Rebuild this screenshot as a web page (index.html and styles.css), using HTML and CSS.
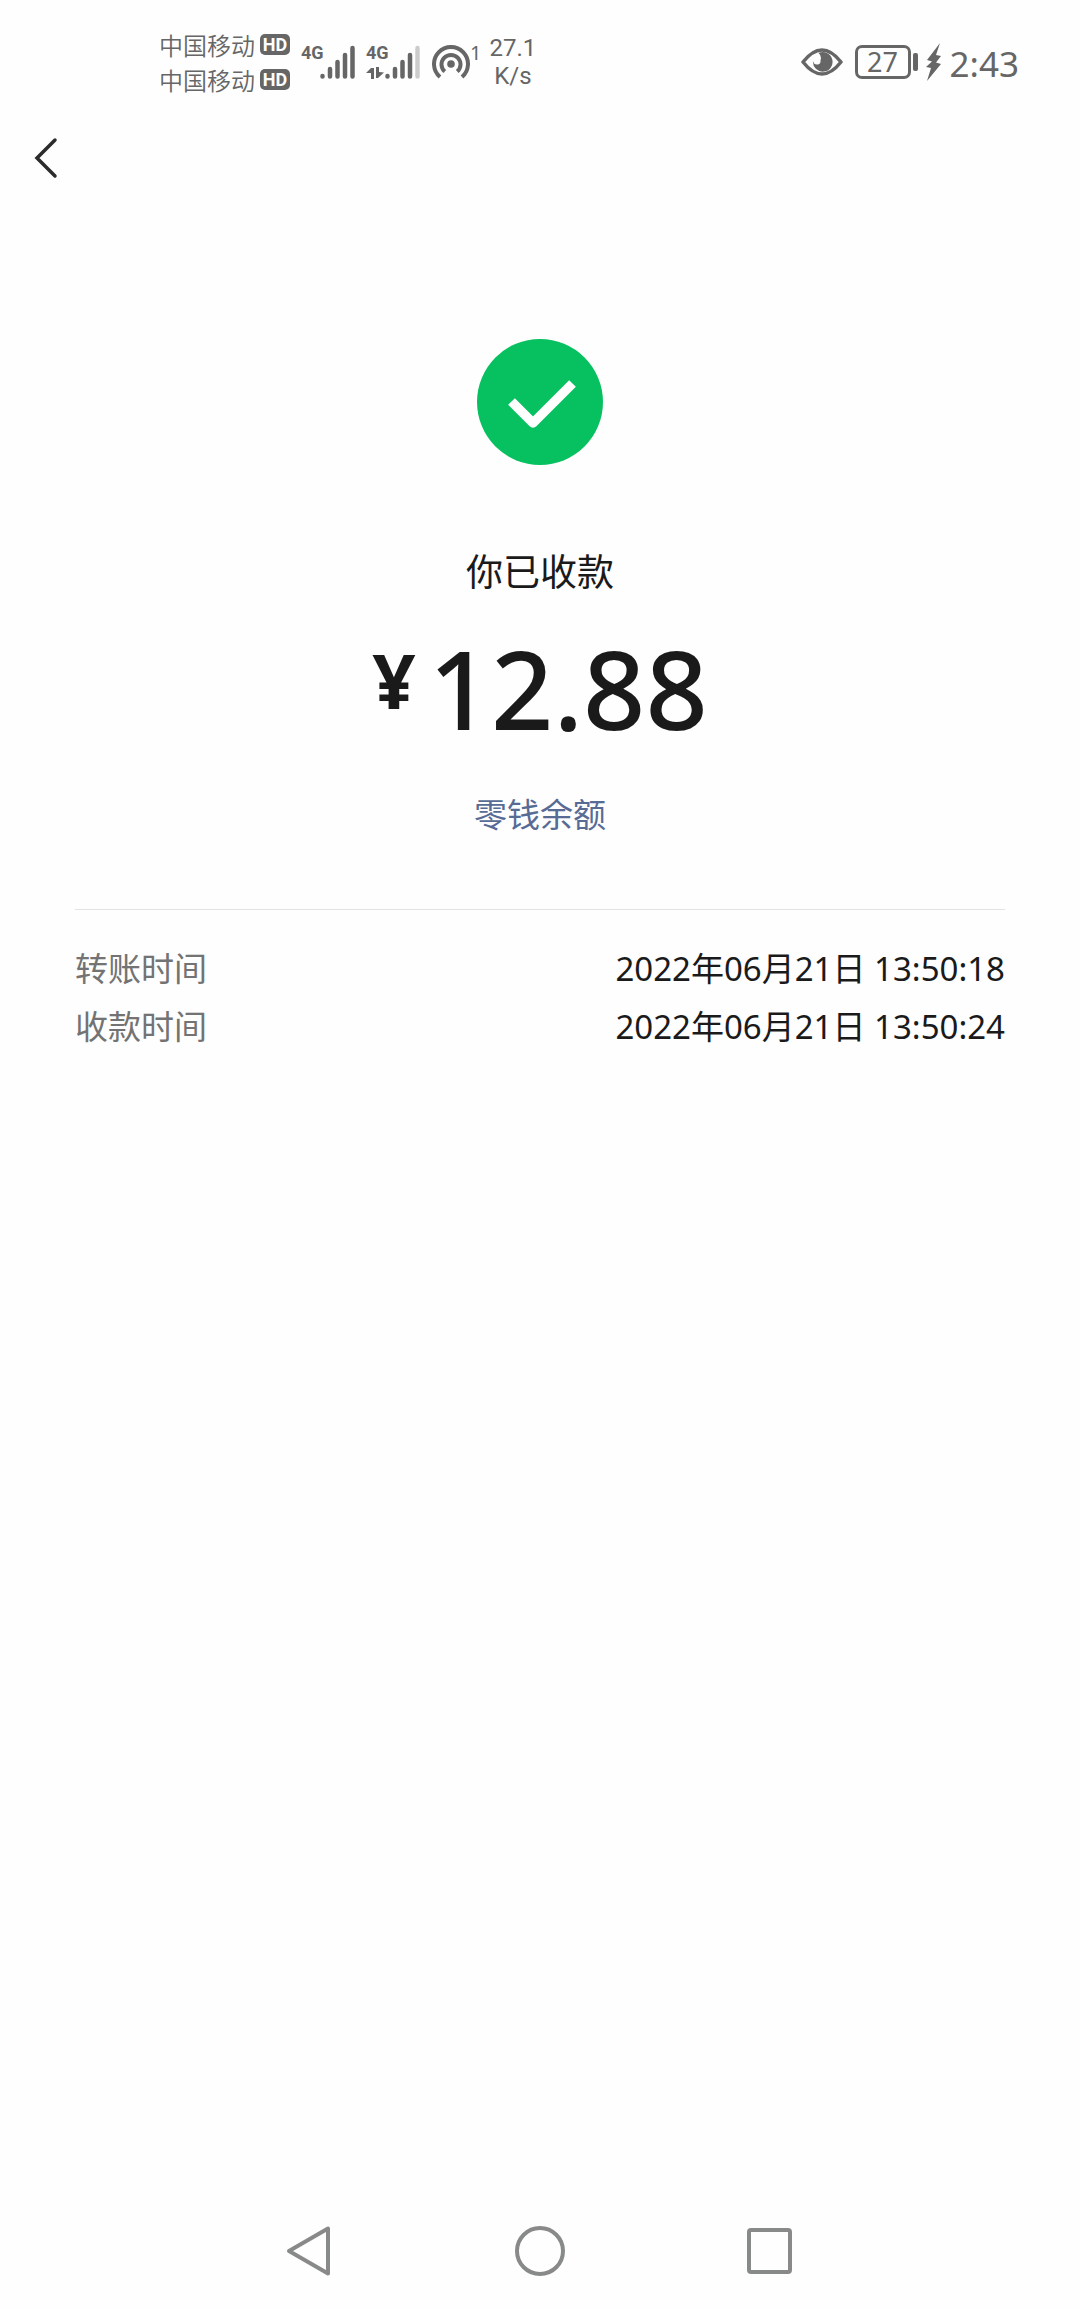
FILE: index.html
```html
<!DOCTYPE html>
<html lang="zh-CN">
<head>
<meta charset="utf-8">
<meta name="viewport" content="width=device-width, initial-scale=1">
<title>你已收款</title>
<link rel="stylesheet" href="styles.css">
</head>
<body>
<div class="page">
  <div class="status">
    <div class="carriers">
      <div class="carrier"><span>中国移动</span><span class="hd">HD</span></div>
      <div class="carrier"><span>中国移动</span><span class="hd">HD</span></div>
    </div>
    <div class="signal">
      <span class="net">4G</span>
      <svg width="35" height="34" viewBox="0 0 35 34" fill="none" stroke="#666" stroke-width="4.500" stroke-linecap="round"><path d="M2.500 31V31.500M10 24V31.500M17.500 17V31.500M25 10V31.500M32.500 3V31.500"/></svg>
    </div>
    <div class="signal">
      <div class="net-stack">
        <span class="net">4G</span>
        <svg width="18" height="12" viewBox="0 0 18 12" fill="#666"><path d="M5 1H8V12H5V6H0ZM10 0H13V5L18 5.500L12 11H10Z"/></svg>
      </div>
      <svg width="35" height="34" viewBox="0 0 35 34" fill="none" stroke="#666" stroke-width="4.500" stroke-linecap="round"><path d="M2.500 31V31.500M10 24V31.500M17.500 17V31.500M25 10V31.500"/><path stroke="#ccc" d="M32.500 3V31.500"/></svg>
    </div>
    <div class="hotspot">
      <svg width="38" height="34" viewBox="0 0 38 34" fill="none" stroke="#666" stroke-width="4"><circle cx="19" cy="19" r="3.800" fill="#666" stroke="none"/><path d="M12.800 26.600A9.500 9.500 0 1 1 25.200 26.600M8 32A17 17 0 1 1 30 32"/></svg>
      <span class="clients">1</span>
    </div>
    <div class="speed"><span>27.1</span><span>K/s</span></div>
    <div class="right">
      <svg width="42" height="28" viewBox="0 0 42 28"><path d="M2 14Q21-10 40 14Q21 38 2 14Z" fill="none" stroke="#666" stroke-width="3.500" stroke-linejoin="round"/><path d="M17.500 5A9.800 9.800 0 1 1 12 13Q13 17 16.500 16.500Q20 16 19.500 12Q21 8 17.500 5Z" fill="#666"/></svg>
      <div class="battery"><span class="level">27</span><span class="tip"></span></div>
      <svg width="16" height="38" viewBox="0 0 16 38" fill="#666"><path d="M14 0L1 17L6 18.500L0 24L5 25L1 38L15 21L10 19.500L15 13L10 12Z"/></svg>
      <time class="clock">2:43</time>
    </div>
  </div>

  <header class="header">
    <button class="back" type="button" aria-label="返回">
      <svg width="24" height="42" viewBox="0 0 24 42" fill="none" stroke="#2b2b2b" stroke-width="3.500" stroke-linecap="round"><path d="M21 3L3 21L21 39"/></svg>
    </button>
  </header>

  <main class="main">
    <svg class="done" width="126" height="126" viewBox="0 0 126 126"><circle cx="63" cy="63" r="63" fill="#07c160"/><path d="M34.500 62.500L56 84L95.500 44.500" fill="none" stroke="#fff" stroke-width="9.500" stroke-linejoin="round"/></svg>
    <h1 class="title">你已收款</h1>
    <p class="amount"><span class="yen">¥</span><span>12.88</span></p>
    <a class="balance" href="#">零钱余额</a>
    <dl class="details">
      <div class="row"><dt>转账时间</dt><dd>2022年06月21日 13:50:18</dd></div>
      <div class="row"><dt>收款时间</dt><dd>2022年06月21日 13:50:24</dd></div>
    </dl>
  </main>

  <nav class="nav">
    <button type="button" aria-label="返回"><svg width="50" height="52" viewBox="0 0 50 52"><path d="M4 26L43 3.500V48.500Z"/></svg></button>
    <button type="button" aria-label="主页"><svg width="50" height="52" viewBox="0 0 50 52"><circle cx="25" cy="26" r="23"/></svg></button>
    <button type="button" aria-label="最近任务"><svg width="50" height="52" viewBox="0 0 50 52"><rect x="4" y="5" width="41" height="42" rx="2"/></svg></button>
  </nav>
</div>
</body>
</html>
```
FILE: styles.css
```css
* {
  box-sizing: border-box;
}

body {
  margin: 0;
  background: #fefefe;
  color: #1a1a1a;
  font-family: "Noto Sans", "Noto Sans CJK SC", sans-serif;
}

svg {
  display: block;
  flex: none;
}

button {
  padding: 0;
  border: 0;
  background: none;
}

.page {
  display: flex;
  flex-direction: column;
  min-height: 100vh;
}

/* status bar */

.status {
  display: flex;
  align-items: center;
  height: 124px;
  padding: 0 61px 0 159px;
  color: #666;
}

.carrier {
  display: flex;
  align-items: center;
  gap: 5px;
  height: 35px;
  font-family: "Noto Sans CJK SC", sans-serif;
  font-size: 24px;
  font-weight: 350;
  line-height: 32px;
}

.hd {
  width: 30px;
  height: 21px;
  border-radius: 5px;
  background: #666;
  color: #fefefe;
  font: 700 18px/21px Roboto, sans-serif;
  text-align: center;
}

.signal {
  display: flex;
  align-items: flex-start;
  height: 34px;
  margin-left: 11px;
}

.net {
  font: 700 18px/16px "Liberation Sans Narrow", Roboto, sans-serif;
}

.signal > .net,
.net-stack {
  width: 19px;
}

.net-stack {
  display: flex;
  flex-direction: column;
  gap: 6px;
}

.hotspot {
  display: flex;
  margin-left: 12px;
}

.clients {
  font: 400 20px/16px "Noto Sans", sans-serif;
}

.speed {
  display: flex;
  flex-direction: column;
  align-items: center;
  margin-left: 8px;
  font: 400 24px/28px Roboto, sans-serif;
}

.right {
  display: flex;
  align-items: center;
  margin-left: auto;
}

.battery {
  display: flex;
  align-items: center;
  gap: 2px;
  margin: 0 8px 0 12px;
}

.level {
  width: 56px;
  height: 34px;
  border: 3px solid #666;
  border-radius: 7px;
  font-size: 27px;
  line-height: 28px;
  text-align: center;
}

.tip {
  width: 5px;
  height: 18px;
  border-radius: 2px;
  background: #666;
}

.clock {
  margin-left: 8px;
  font-size: 35px;
  line-height: 40px;
  padding-top: 3px;
}

/* title bar */

.header {
  display: flex;
  align-items: center;
  height: 68px;
  padding: 0 34px;
}

/* receipt */

.main {
  display: flex;
  flex: 1;
  flex-direction: column;
  align-items: center;
  padding: 147px 75px 0;
}

.title {
  margin: 79px 0 0;
  font-size: 37px;
  font-weight: 400;
  line-height: 56px;
}

.amount {
  display: flex;
  align-items: flex-start;
  gap: 13px;
  margin: 32px 0 0;
  font-size: 109px;
  font-weight: 500;
  line-height: 112px;
}

.yen {
  font-size: 76px;
  font-weight: 700;
  line-height: 96px;
}

.balance {
  margin-top: 47px;
  color: #576b95;
  font-size: 33px;
  line-height: 48px;
  text-decoration: none;
}

.details {
  align-self: stretch;
  margin: 70px 0 0;
  padding-top: 30px;
  border-top: 1px solid #e2e2e2;
  font-size: 33px;
  line-height: 58px;
}

.row {
  display: flex;
  justify-content: space-between;
}

.row dt {
  color: #737373;
}

.row dd {
  margin: 0;
}

/* system navigation */

.nav {
  display: flex;
  justify-content: center;
  gap: 180px;
  padding: 0 0 33px;
}

.nav svg {
  fill: none;
  stroke: #888a89;
  stroke-width: 4;
  stroke-linejoin: round;
}
```
